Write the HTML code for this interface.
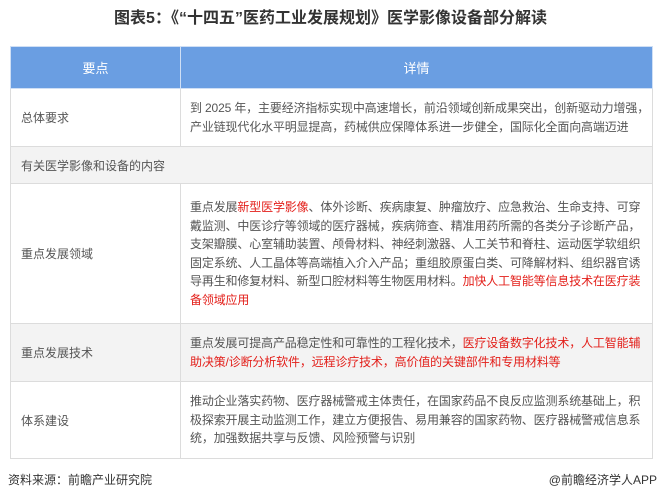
<!DOCTYPE html>
<html><head><meta charset="utf-8"><style>
body{margin:0;width:661px;height:502px;background:#fff;font-family:"Liberation Sans","Noto Sans CJK SC",sans-serif;color:#555;overflow:hidden;position:relative}
h1{position:absolute;top:8px;left:0;width:661px;text-align:center;margin:0;font-size:16px;font-weight:bold;color:#333;line-height:22px}
table{position:absolute;left:10px;top:46px;width:642px;border-collapse:collapse;font-size:12px;table-layout:fixed}
td,th{border:1px solid #dcdcdc;padding:0;vertical-align:middle;overflow:hidden}
th{background:#6a9ee2;color:#fff;font-weight:normal;font-size:13px;height:41px;border-color:#cfdff5}
td.k{padding-left:10px}
td.v{line-height:18.5px;padding:0 0 0 9px;letter-spacing:-0.15px}
.g{background:#f3f3f3}
.r{color:#e3201b}
.src{position:absolute;top:471px;left:8px;font-size:12px;color:#333}
.app{position:absolute;top:471px;right:4px;font-size:12px;color:#333}
</style></head><body>
<h1>图表5：《“十四五”医药工业发展规划》医学影像设备部分解读</h1>
<table>
<colgroup><col style="width:170px"><col style="width:472px"></colgroup>
<tr><th>要点</th><th>详情</th></tr>
<tr style="height:58px"><td class="k">总体要求</td><td class="v">到 2025 年，主要经济指标实现中高速增长，前沿领域创新成果突出，创新驱动力增强，产业链现代化水平明显提高，药械供应保障体系进一步健全，国际化全面向高端迈进</td></tr>
<tr class="g" style="height:37px"><td colspan="2" style="padding-left:10px">有关医学影像和设备的内容</td></tr>
<tr style="height:140px"><td class="k">重点发展领域</td><td class="v">重点发展<span class="r">新型医学影像</span>、体外诊断、疾病康复、肿瘤放疗、应急救治、生命支持、可穿戴监测、中医诊疗等领域的医疗器械，疾病筛查、精准用药所需的各类分子诊断产品，支架瓣膜、心室辅助装置、颅骨材料、神经刺激器、人工关节和脊柱、运动医学软组织固定系统、人工晶体等高端植入介入产品；重组胶原蛋白类、可降解材料、组织器官诱导再生和修复材料、新型口腔材料等生物医用材料。<span class="r">加快人工智能等信息技术在医疗装备领域应用</span></td></tr>
<tr class="g" style="height:58px"><td class="k">重点发展技术</td><td class="v">重点发展可提高产品稳定性和可靠性的工程化技术，<span class="r">医疗设备数字化技术，人工智能辅助决策/诊断分析软件，远程诊疗技术，高价值的关键部件和专用材料等</span></td></tr>
<tr style="height:77px"><td class="k">体系建设</td><td class="v">推动企业落实药物、医疗器械警戒主体责任，在国家药品不良反应监测系统基础上，积极探索开展主动监测工作，建立方便报告、易用兼容的国家药物、医疗器械警戒信息系统，加强数据共享与反馈、风险预警与识别</td></tr>
</table>
<div class="src">资料来源：前瞻产业研究院</div>
<div class="app">@前瞻经济学人APP</div>
</body></html>
